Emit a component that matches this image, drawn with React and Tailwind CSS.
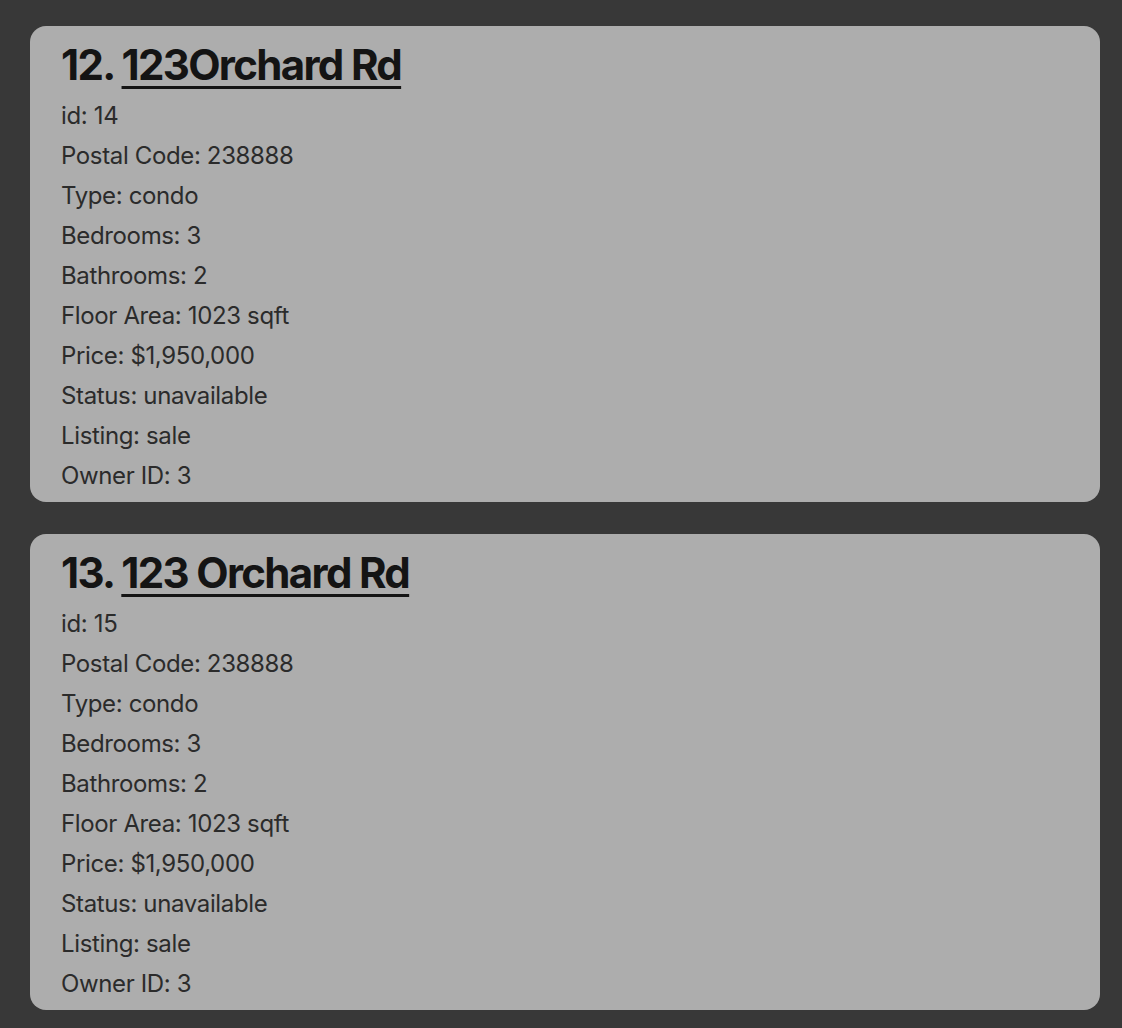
export default function App() {
  const items = [
    { n: 12, name: "123Orchard Rd", id: 14 },
    { n: 13, name: "123 Orchard Rd", id: 15 },
  ];
  return (
    <div className="min-h-[1028px] w-[1122px] bg-[#383838] pt-[26px] pl-[30px] pr-[22px] flex flex-col gap-[32px]" style={{ fontFamily: "Inter, 'Noto Sans', sans-serif" }}>
      {items.map((it) => (
        <div key={it.n} className="bg-[#adadad] rounded-[16px] h-[476px] pl-[31px] pt-[15px]">
          <div className="text-[42px] font-bold leading-[48px] tracking-[-0.04em] text-[#141414]">
            {it.n}. <span className="underline decoration-[2.5px] underline-offset-[6px]">{it.name}</span>
          </div>
          <div className="text-[24px] leading-[40px] text-[#2b2b2b] tracking-[-0.015em] mt-[7px]">
            <div>id: {it.id}</div>
            <div>Postal Code: 238888</div>
            <div>Type: condo</div>
            <div>Bedrooms: 3</div>
            <div>Bathrooms: 2</div>
            <div>Floor Area: 1023 sqft</div>
            <div>Price: $1,950,000</div>
            <div>Status: unavailable</div>
            <div>Listing: sale</div>
            <div>Owner ID: 3</div>
          </div>
        </div>
      ))}
    </div>
  );
}
